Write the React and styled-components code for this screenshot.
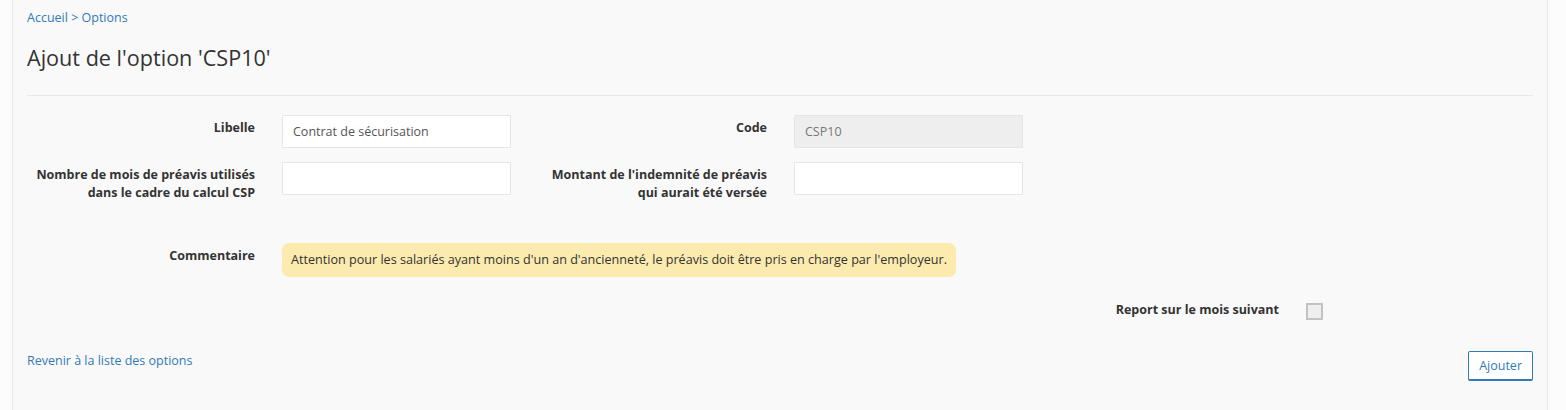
import React from 'react';
import styled, { createGlobalStyle } from 'styled-components';

const GlobalStyle = createGlobalStyle`
    body {
        margin: 0;
        background-color: #fcfcfc;
        font-family: "Open Sans", "DejaVu Sans", sans-serif;
        font-size: 12.5px;
        color: #333;
    }
`;

const Page = styled.div`
    margin: 0 18px 0 12px;
    min-height: 410px;
    box-sizing: border-box;
    background-color: #f9f9f9;
    border-left: 1px solid #e8e8e8;
    border-right: 1px solid #e8e8e8;
    padding: 0 14px;
`;

const Breadcrumb = styled.div`
    padding-top: 9px;
    line-height: 17px;
    color: #337ab7;
`;

const Crumb = styled.a`
    color: #337ab7;
    text-decoration: none;
`;

const Title = styled.h1`
    margin: 20px 0 0 0;
    font-size: 21.6px;
    font-weight: 400;
    line-height: 24px;
    color: #333;
`;

const Rule = styled.hr`
    margin: 25px 0 0 0;
    border: 0;
    border-top: 1px solid #e9e9e9;
`;

const Form = styled.div`
    margin: 19px -15px 0 -15px;
`;

const Row = styled.div`
    display: grid;
    grid-template-columns: repeat(6, 1fr);
    margin-top: ${props => props.$gap || 0}px;
`;

const Cell = styled.div`
    padding: 0 13px 0 14px;
    grid-column: ${props => props.$col} / span ${props => props.$span || 1};
`;

const Label = styled(Cell)`
    padding-top: 4px;
    text-align: right;
    font-weight: 700;
    line-height: 18px;
    color: #333;
`;

const Input = styled.input`
    display: block;
    width: 100%;
    height: 33px;
    box-sizing: border-box;
    padding: 0 10px;
    font-family: inherit;
    font-size: 12.5px;
    color: ${props => props.readOnly ? '#777' : '#555'};
    background-color: ${props => props.readOnly ? '#eeeeee' : '#fff'};
    border: 1px solid #e6e6e6;
    border-radius: 1px;
    outline: none;
`;

const Notice = styled.div`
    display: inline-block;
    padding: 0 9px;
    line-height: 34px;
    font-size: 12.6px;
    color: #333;
    background-color: #fcebae;
    border-radius: 7px;
    white-space: nowrap;
`;

const Check = styled.span`
    display: block;
    width: 17px;
    height: 17px;
    margin-top: 6px;
    box-sizing: border-box;
    background-color: #efefef;
    border: 2px solid #c2c2c2;
`;

const Footer = styled.div`
    display: flex;
    justify-content: space-between;
    align-items: center;
    margin-top: 31px;
`;

const BackLink = styled.a`
    color: #337ab7;
    text-decoration: none;
    margin-top: -12px;
`;

const Button = styled.button`
    height: 30px;
    padding: 0 10px;
    font-family: inherit;
    font-size: 12.5px;
    color: #337ab7;
    background-color: #fff;
    border: 1px solid #337ab7;
    border-bottom-width: 2px;
    border-radius: 2px;
`;

export default function App() {
    return (
        <>
            <GlobalStyle />
            <Page>
                <Breadcrumb>
                    <Crumb href="#">Accueil</Crumb> &gt; <Crumb href="#">Options</Crumb>
                </Breadcrumb>
                <Title>Ajout de l'option 'CSP10'</Title>
                <Rule />
                <Form>
                    <Row>
                        <Label $col={1}>Libelle</Label>
                        <Cell $col={2}><Input defaultValue="Contrat de sécurisation" /></Cell>
                        <Label $col={3}>Code</Label>
                        <Cell $col={4}><Input readOnly defaultValue="CSP10" /></Cell>
                    </Row>
                    <Row $gap={14}>
                        <Label $col={1}>Nombre de mois de préavis utilisés<br />dans le cadre du calcul CSP</Label>
                        <Cell $col={2}><Input /></Cell>
                        <Label $col={3}>Montant de l'indemnité de préavis<br />qui aurait été versée</Label>
                        <Cell $col={4}><Input /></Cell>
                    </Row>
                    <Row $gap={41}>
                        <Label $col={1}>Commentaire</Label>
                        <Cell $col={2} $span={5}>
                            <Notice>Attention pour les salariés ayant moins d'un an d'ancienneté, le préavis doit être pris en charge par l'employeur.</Notice>
                        </Cell>
                    </Row>
                    <Row $gap={20}>
                        <Label $col={5}>Report sur le mois suivant</Label>
                        <Cell $col={6}><Check /></Cell>
                    </Row>
                </Form>
                <Footer>
                    <BackLink href="#">Revenir à la liste des options</BackLink>
                    <Button>Ajouter</Button>
                </Footer>
            </Page>
        </>
    );
}
